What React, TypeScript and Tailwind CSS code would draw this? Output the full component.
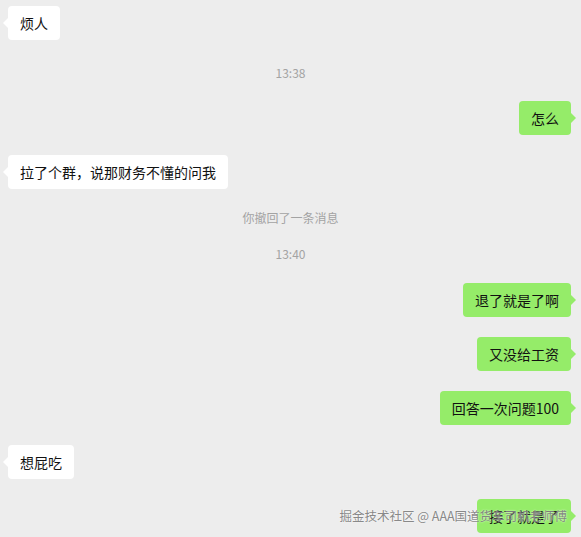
import React from 'react';

type Msg =
  | { kind: 'left' | 'right'; text: string; mt: string }
  | { kind: 'note'; text: string; mt: string };

const messages: Msg[] = [
  { kind: 'left', text: '烦人', mt: 'mt-[6px]' },
  { kind: 'note', text: '13:38', mt: 'mt-[25px]' },
  { kind: 'right', text: '怎么', mt: 'mt-[20px]' },
  { kind: 'left', text: '拉了个群，说那财务不懂的问我', mt: 'mt-[20px]' },
  { kind: 'note', text: '你撤回了一条消息', mt: 'mt-[21px]' },
  { kind: 'note', text: '13:40', mt: 'mt-[20px]' },
  { kind: 'right', text: '退了就是了啊', mt: 'mt-[21px]' },
  { kind: 'right', text: '又没给工资', mt: 'mt-[20px]' },
  { kind: 'right', text: '回答一次问题100', mt: 'mt-[20px]' },
  { kind: 'left', text: '想屁吃', mt: 'mt-[20px]' },
  { kind: 'right', text: '接了就是了', mt: 'mt-[20px]' },
];

function Bubble({ side, text }: { side: 'left' | 'right'; text: string }) {
  const left = side === 'left';
  return (
    <div className={`flex ${left ? 'justify-start pl-[8px]' : 'justify-end pr-[10px]'}`}>
      <div
        className={`relative h-[34px] px-3 flex items-center rounded-[4px] text-[14px] leading-5 text-[#111111] ${
          left ? 'bg-white' : 'bg-[#95ec69]'
        }`}
      >
        <span
          className={`absolute top-1/2 -translate-y-1/2 w-0 h-0 border-y-[5px] border-y-transparent ${
            left
              ? '-left-[5px] border-r-[5px] border-r-white'
              : '-right-[5px] border-l-[5px] border-l-[#95ec69]'
          }`}
        />
        {text}
      </div>
    </div>
  );
}

export default function App() {
  return (
    <div
      className="relative w-[581px] h-[537px] overflow-hidden bg-[#ededed] flex flex-col"
      style={{ fontFamily: '"Microsoft YaHei", "Noto Sans CJK SC", "Noto Sans", sans-serif' }}
    >
      {messages.map((m, i) =>
        m.kind === 'note' ? (
          <div key={i} className={`${m.mt} h-4 flex items-center justify-center text-[12px] text-[#a3a3a3]`}>
            {m.text}
          </div>
        ) : (
          <div key={i} className={m.mt}>
            <Bubble side={m.kind} text={m.text} />
          </div>
        )
      )}

      <div className="absolute right-[14px] top-[506px] text-[12.5px] leading-5 text-[#7a7a7a]/90 [text-shadow:0_0_2px_rgba(255,255,255,0.9)]">
        掘金技术社区 @ AAA国道货车司机老师傅
      </div>
    </div>
  );
}
